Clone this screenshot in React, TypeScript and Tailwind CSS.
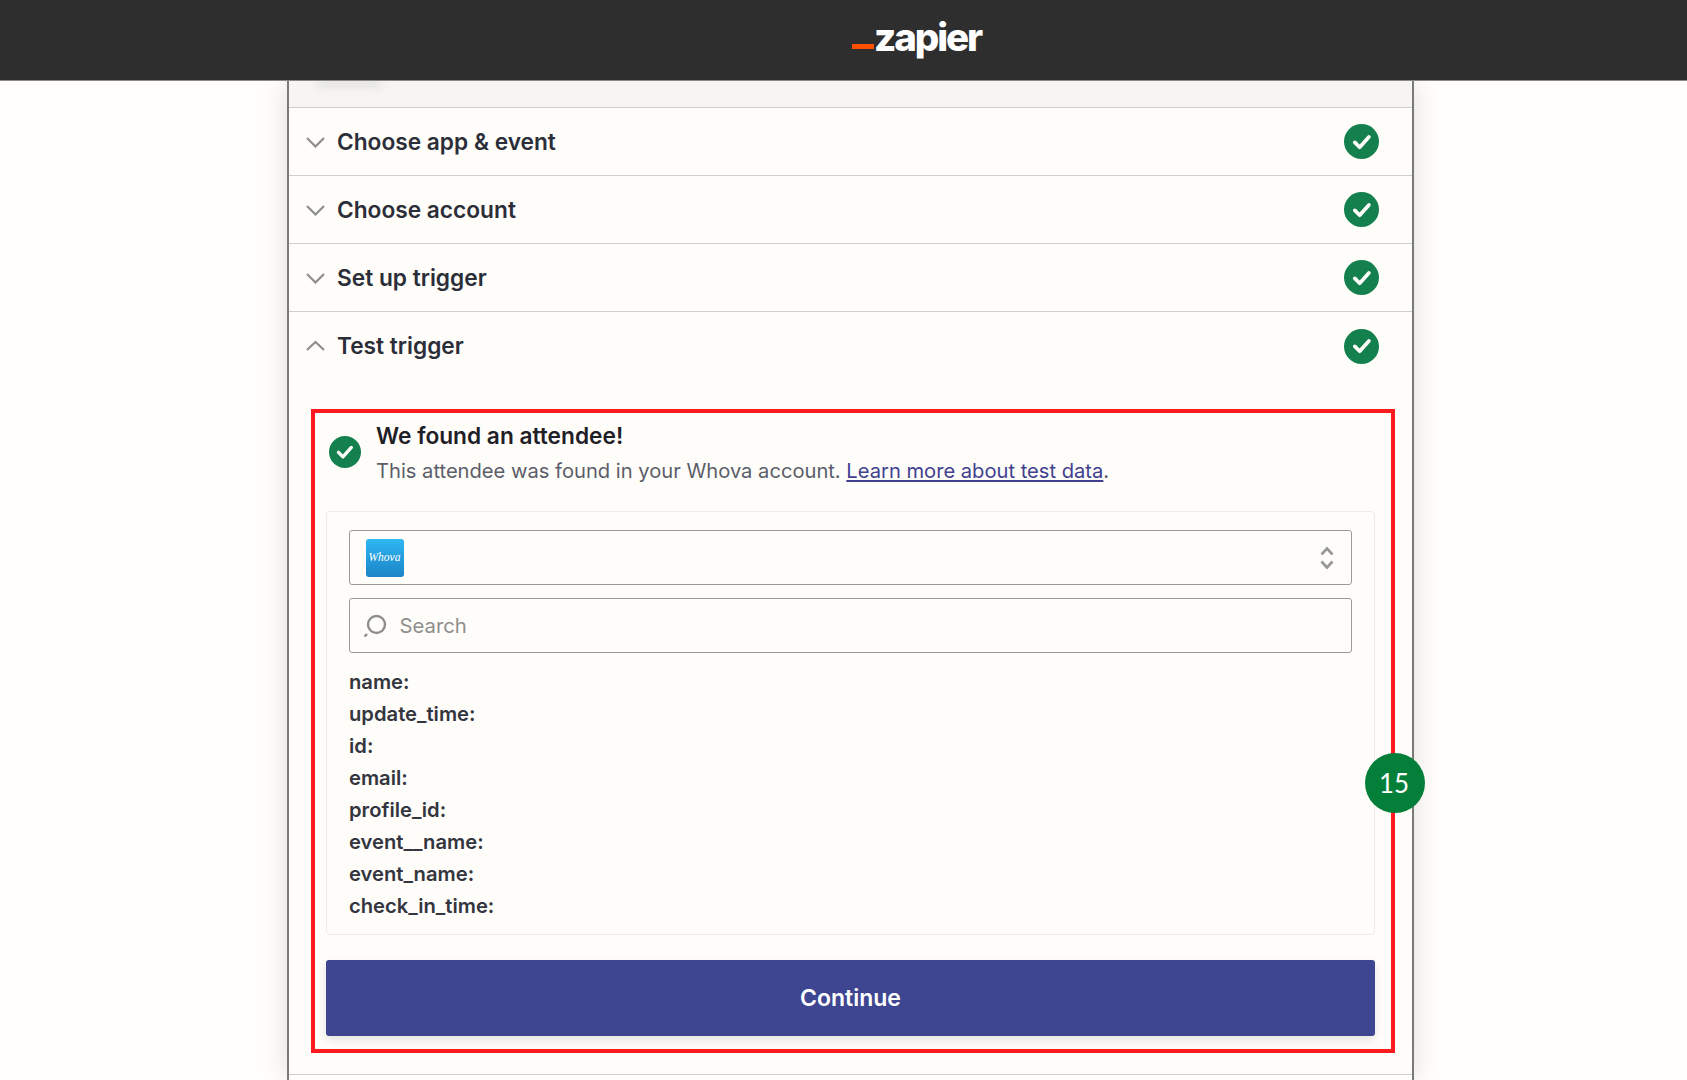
const sans = "font-['Inter','Noto_Sans',sans-serif]";

function Check({ size }: { size: string }) {
  return (
    <span className={`flex shrink-0 items-center justify-center rounded-full bg-[#13804e] ${size}`}>
      <svg viewBox="0 0 20 20" className="h-[62%] w-[62%]" fill="none" stroke="#fffdf9" strokeWidth="3.4" strokeLinecap="round" strokeLinejoin="round">
        <polyline points="3.5,10.5 8,15 16.5,5.5" />
      </svg>
    </span>
  );
}

function Chevron({ up }: { up?: boolean }) {
  return (
    <svg width="19" height="11" viewBox="0 0 19 11" fill="none" stroke="#8e8e8a" strokeWidth="2.2" className={`shrink-0 ${up ? "-mt-[2px]" : "mt-[2px]"}`}>
      <polyline points={up ? "1,10 9.5,2 18,10" : "1,1 9.5,9.5 18,1"} />
    </svg>
  );
}

function Row({ label, up, last }: { label: string; up?: boolean; last?: boolean }) {
  return (
    <div className={`flex h-[68px] items-center pl-[17px] pr-[33px] ${last ? "" : "border-b border-[#cfcfcb]"}`}>
      <Chevron up={up} />
      <span className="ml-[12px] flex-1 text-[22.7px] font-semibold leading-8 text-[#2b2e38]">{label}</span>
      <Check size="h-[35px] w-[35px]" />
    </div>
  );
}

const fields = ["name:", "update_time:", "id:", "email:", "profile_id:", "event__name:", "event_name:", "check_in_time:"];

export default function App() {
  return (
    <div className={`flex h-[1080px] flex-col overflow-hidden bg-[#fffefa] ${sans}`}>
      <header className="relative z-10 flex h-[81px] shrink-0 items-center border-b border-[#8a8a86] bg-[#2e2e2e] pl-[852px]">
        <span className="mt-[13px] h-[5px] w-[22px] bg-[#ff4f00]" />
        <span className="mb-[6px] text-[38.5px] font-extrabold leading-none tracking-[-0.055em] text-white">zapier</span>
      </header>
      <main className="ml-[287px] w-[1127px] flex-1 border-x-2 border-[#7a7a78] bg-[#fffdf9] shadow-[0_0_26px_rgba(0,0,0,0.13)]">
        <div className="relative h-[27px] overflow-hidden border-b border-[#cfcfcb] bg-[#f6f5f2]">
          <div className="absolute left-[28px] top-0 h-[5px] w-[65px] rounded-full bg-[#d9d8d5] blur-[4px]" />
        </div>
        <Row label="Choose app & event" />
        <Row label="Choose account" />
        <Row label="Set up trigger" />
        <Row label="Test trigger" up last />
        <section className="relative ml-[22px] mt-[29px] h-[644px] w-[1084px] border-4 border-[#ff1a1f] pl-[11px] pr-[16px] pt-[7px]">
          <div className="flex items-center pl-[3px]">
            <Check size="mb-[4px] h-8 w-8" />
            <div className="ml-[15px]">
              <h2 className="text-[22.7px] font-semibold leading-8 text-[#1f2027]">We found an attendee!</h2>
              <p className="mt-[3px] text-[20.15px] leading-8 text-[#5b5e69]">
                This attendee was found in your Whova account.{" "}
                <span className="text-[#413f8f] underline">Learn more about test data</span>.
              </p>
            </div>
          </div>
          <div className="mt-[24px] flex h-[424px] flex-col gap-[13px] rounded border border-[#ecebe8] px-[22px] pt-[18px]">
            <div className="flex h-[55px] items-center justify-between rounded-[3px] border-[1.5px] border-[#9b9b98] pl-[15.5px] pr-[17.5px]">
              <span className="flex h-[38px] w-[38px] items-center justify-center rounded-[3px] bg-gradient-to-b from-[#2fb8f2] to-[#1b84c7] font-['Liberation_Serif',serif] text-[11.5px] italic leading-none text-white">
                Whova
              </span>
              <svg width="14" height="24" viewBox="0 0 14 24" fill="none" stroke="#979794" strokeWidth="2.6">
                <polyline points="1.5,8.5 7,2.5 12.5,8.5" />
                <polyline points="1.5,15.5 7,21.5 12.5,15.5" />
              </svg>
            </div>
            <div className="flex h-[55px] items-center rounded-[3px] border-[1.5px] border-[#9b9b98] pl-[12.5px]">
              <svg width="24" height="24" viewBox="0 0 24 24" fill="none" stroke="#8d8d8a" strokeWidth="2.4" className="shrink-0">
                <circle cx="13.5" cy="10.5" r="8.5" />
                <line x1="1.5" y1="22.5" x2="4" y2="20" />
              </svg>
              <span className="ml-[13px] mt-[1px] text-[20.3px] text-[#8e8e8c]">Search</span>
            </div>
            <div className="flex flex-col">
              {fields.map((f) => (
                <div key={f} className="h-8 text-[20.2px] font-semibold leading-8 text-[#33353f]">
                  {f}
                </div>
              ))}
            </div>
          </div>
          <button className="mt-[25px] flex h-[76px] w-full items-center justify-center rounded-[3px] bg-[#3e4692] text-[23px] font-semibold text-white shadow-[0_4px_10px_rgba(0,0,0,0.1)]">
            Continue
          </button>
          <div className="absolute left-[1050px] top-[340px] flex h-[60px] w-[60px] items-center justify-center rounded-full bg-[#047f3a] pr-[2px] font-['Lato',sans-serif] text-[26px] text-white">
            15
          </div>
        </section>
        <div className="mt-[21px] border-b border-[#cfcfcb]" />
      </main>
    </div>
  );
}
